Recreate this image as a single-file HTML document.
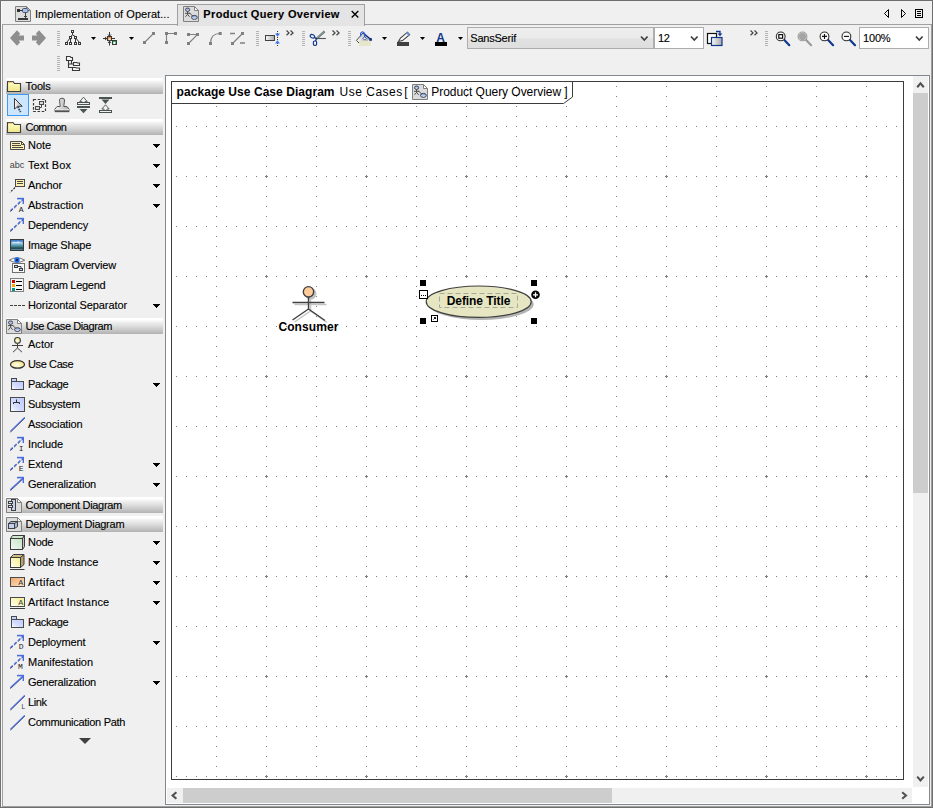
<!DOCTYPE html>
<html><head><meta charset="utf-8"><title>Product Query Overview</title>
<style>
html,body{margin:0;padding:0}
body{width:933px;height:808px;position:relative;overflow:hidden;background:#f0f0f0;font-family:"Liberation Sans",sans-serif}
.a{position:absolute}
.t{position:absolute;white-space:pre;-webkit-text-stroke:0.12px}
.d{-webkit-text-stroke:0}
.hd{position:absolute;left:6px;width:157px;height:16px;background:linear-gradient(#fff 0,#fff 12%,#f0f0f0 26%,#dedede 50%,#c8c8c8 76%,#b2b2b2 100%)}
svg{position:absolute;overflow:visible}
.ce{shape-rendering:crispEdges}
.dd{position:absolute;width:0;height:0;border-left:3.5px solid transparent;border-right:3.5px solid transparent;border-top:4px solid #000}
</style></head><body>
<div class="a" style="left:0px;top:0px;width:933px;height:1px;background:#6e6e6e;"></div>
<div class="a" style="left:0px;top:0px;width:1px;height:808px;background:#727272;"></div>
<div class="a" style="left:931px;top:24px;width:1px;height:783px;background:#a0a0a0;"></div>
<div class="a" style="left:932px;top:0px;width:1px;height:808px;background:#6e6e6e;"></div>
<div class="a" style="left:2px;top:806px;width:930px;height:1px;background:#a0a0a0;"></div>
<div class="a" style="left:0px;top:807px;width:933px;height:1px;background:#6e6e6e;"></div>
<div class="a" style="left:1px;top:1px;width:1px;height:805px;background:#f8f8f8;"></div>
<div class="a" style="left:2px;top:24px;width:930px;height:1px;background:#a0a0a0;"></div>
<div class="a" style="left:2px;top:24px;width:1px;height:782px;background:#a0a0a0;"></div>
<div class="a" style="left:177px;top:4px;width:188px;height:22px;background:#e4e4e4;border:1px solid #a0a0a0;border-bottom:none;box-sizing:border-box;height:22px"></div>
<div class="a" style="left:178px;top:5px;width:186px;height:21px;background:#e4e4e4;"></div>
<svg style="left:15px;top:6px" width="16" height="16" viewBox="0 0 16 16"><path d="M0.5 0.5 H11.5 L15.5 4.5 V15.5 H0.5 Z" fill="#dcdcdc" stroke="#808080"/><path d="M11.5 0.5 V4.5 H15.5 Z" fill="#fff" stroke="#808080" stroke-linejoin="round"/><rect x="2" y="3" width="3" height="3" fill="#303030"/><path d="M5 4.5 H8" stroke="#303030"/><rect x="7.5" y="2.5" width="5.5" height="4" rx="1.2" fill="#a8c0ec" stroke="#404858" stroke-width="0.9"/><path d="M10.5 6.8 V12 M9 10.5 H12" stroke="#404040"/><rect x="3" y="12" width="10" height="2" fill="#383838"/></svg>
<svg style="left:183px;top:6px" width="16" height="16" viewBox="0 0 16 16"><path d="M0.5 0.5 H11.5 L15.5 4.5 V15.5 H0.5 Z" fill="#dcdcdc" stroke="#808080"/><path d="M11.5 0.5 V4.5 H15.5 Z" fill="#fff" stroke="#808080" stroke-linejoin="round"/><ellipse cx="4.6" cy="3.7" rx="2.1" ry="1.7" fill="url(#gbe)" stroke="#3c4458" stroke-width="1"/><path d="M4.6 5.4 V8.4 M2 7.3 H7.2 M4.6 8.4 L2.4 10.8 M4.6 8.4 L6.6 10.8 M6.6 7 L10 10.4" stroke="#404040" stroke-width="0.9" fill="none"/><ellipse cx="11.4" cy="11.4" rx="2.9" ry="2" fill="url(#gbe)" stroke="#3c4458" stroke-width="1"/></svg>
<svg style="left:351px;top:10px" width="8" height="8" viewBox="0 0 8 8"><path d="M0.7 1 L7.3 7.6 M7.3 1 L0.7 7.6" stroke="#000" stroke-width="1.35" fill="none"/></svg>
<svg style="left:880px;top:6px" width="40" height="16" viewBox="0 0 40 16"><path d="M8.5 3.5 L4.5 7.5 L8.5 11.5 Z" fill="none" stroke="#000" stroke-width="1"/><path d="M21.5 3.5 L25.5 7.5 L21.5 11.5 Z" fill="none" stroke="#000" stroke-width="1"/><rect x="35.5" y="3.5" width="7" height="8" fill="none" stroke="#000"/><path d="M37 5.5h4M37 7.5h4M37 9.5h4" stroke="#000"/></svg>
<svg width="0" height="0" style="left:0;top:0"><defs>
<linearGradient id="gy" x1="0" y1="0" x2="0" y2="1"><stop offset="0" stop-color="#ffffc4"/><stop offset="1" stop-color="#f2e68a"/></linearGradient>
<linearGradient id="gyd" x1="1" y1="0" x2="0" y2="1"><stop offset="0" stop-color="#f6ee90"/><stop offset="1" stop-color="#fffff0"/></linearGradient>
<linearGradient id="gb" x1="1" y1="0" x2="0" y2="1"><stop offset="0" stop-color="#bccaff"/><stop offset="0.6" stop-color="#d4dcff"/><stop offset="1" stop-color="#ffffff"/></linearGradient>
<linearGradient id="gg" x1="1" y1="0" x2="0" y2="1"><stop offset="0" stop-color="#c4e4c4"/><stop offset="1" stop-color="#f4f8f4"/></linearGradient>
<linearGradient id="go" x1="0" y1="0" x2="1" y2="1"><stop offset="0" stop-color="#f0a868"/><stop offset="1" stop-color="#fce4cc"/></linearGradient>
<linearGradient id="gs" x1="0" y1="0" x2="1" y2="0"><stop offset="0" stop-color="#fafafa"/><stop offset="1" stop-color="#a8a8a8"/></linearGradient>
<linearGradient id="gsv" x1="0" y1="0" x2="0" y2="1"><stop offset="0" stop-color="#f4f4f4"/><stop offset="1" stop-color="#8c8c8c"/></linearGradient>
<linearGradient id="gimg" x1="0" y1="0" x2="0" y2="1"><stop offset="0" stop-color="#2c68c0"/><stop offset="0.35" stop-color="#8cc0e4"/><stop offset="0.6" stop-color="#4c8c9c"/><stop offset="0.8" stop-color="#1c4444"/><stop offset="1" stop-color="#7cb4dc"/></linearGradient>
<linearGradient id="gcombo" x1="0" y1="0" x2="0" y2="1"><stop offset="0" stop-color="#eeeeee"/><stop offset="0.5" stop-color="#ebebeb"/><stop offset="0.55" stop-color="#e1e1e1"/><stop offset="1" stop-color="#dedede"/></linearGradient>
<radialGradient id="gyr" cx="0.45" cy="0.6" r="0.7"><stop offset="0" stop-color="#fffff0"/><stop offset="1" stop-color="#f0dc6c"/></radialGradient>
<linearGradient id="gbe" x1="0" y1="0" x2="0" y2="1"><stop offset="0" stop-color="#7c9cd8"/><stop offset="1" stop-color="#f0f4fc"/></linearGradient>
</defs></svg>
<svg style="left:0;top:0" width="933" height="76" viewBox="0 0 933 76"><path d="M10 38 L17 30.3 L20.2 33.8 L18.6 35.4 H24 V40.6 H18.6 L20.2 42.2 L17 45.7 Z" fill="#8e8e8e"/><path d="M46 38 L39 30.3 L35.8 33.8 L37.4 35.4 H32 V40.6 H37.4 L35.8 42.2 L39 45.7 Z" fill="#8e8e8e"/><rect x="57" y="31" width="3" height="1" fill="#b4b4b4"/><rect x="57" y="33" width="3" height="1" fill="#b4b4b4"/><rect x="57" y="35" width="3" height="1" fill="#b4b4b4"/><rect x="57" y="37" width="3" height="1" fill="#b4b4b4"/><rect x="57" y="39" width="3" height="1" fill="#b4b4b4"/><rect x="57" y="41" width="3" height="1" fill="#b4b4b4"/><rect x="57" y="43" width="3" height="1" fill="#b4b4b4"/><rect x="57" y="45" width="3" height="1" fill="#b4b4b4"/><path d="M72.5 33 V35 M72.5 35 L70.5 36.5 M72.5 35 L75.5 36.5 M70.5 38.5 V42 M75.5 38.5 V42 M69.8 38.5 L66.8 42.2 M76.2 38.5 L79.2 42.2" stroke="#383838" fill="none"/><rect x="71.5" y="30.5" width="2" height="2" fill="#f0f0f0" stroke="#383838" stroke-width="1"/><rect x="69.5" y="36.5" width="2" height="2" fill="#f0f0f0" stroke="#383838" stroke-width="1"/><rect x="74.5" y="36.5" width="2" height="2" fill="#f0f0f0" stroke="#383838" stroke-width="1"/><rect x="65.5" y="42.5" width="2" height="2" fill="#f0f0f0" stroke="#383838" stroke-width="1"/><rect x="69.5" y="42.5" width="2" height="2" fill="#f0f0f0" stroke="#383838" stroke-width="1"/><rect x="74.5" y="42.5" width="2" height="2" fill="#f0f0f0" stroke="#383838" stroke-width="1"/><rect x="78.5" y="42.5" width="2" height="2" fill="#f0f0f0" stroke="#383838" stroke-width="1"/><path d="M91 37 h5 l-2.5 3 Z" fill="#000"/><path d="M109.5 32 V36.5 M109.5 41 V45.5 M103 38.5 H107 M112 38.5 H115" stroke="#383838" fill="none"/><path d="M108 34.5 L109.5 36.3 L111 34.5 M108 43 L109.5 41.2 L111 43 M105 37 L106.8 38.5 L105 40" stroke="#383838" fill="none"/><rect x="107.5" y="36.5" width="4" height="4" fill="#f08c3c" stroke="#383838"/><rect x="108.6" y="38.4" width="2" height="1.7" fill="#fff0d8"/><rect x="112.5" y="40.5" width="4" height="4" fill="#30b060" stroke="#383838"/><rect x="113.3" y="42" width="2" height="2" fill="#fff"/><path d="M129 37 h5 l-2.5 3 Z" fill="#000"/><path d="M144.5 42.5 L153.5 33.5" stroke="#808080" stroke-width="1.1"/><rect x="143.0" y="41.0" width="3" height="3" fill="#808080"/><rect x="152.0" y="32.0" width="3" height="3" fill="#808080"/><path d="M166.5 42.5 V33.5 H175.5" stroke="#808080" stroke-width="1.1" fill="none"/><rect x="165.0" y="41.0" width="3" height="3" fill="#808080"/><rect x="165.0" y="32.0" width="3" height="3" fill="#808080"/><rect x="174.0" y="32.0" width="3" height="3" fill="#808080"/><path d="M188.5 34.5 H197.5 L188.5 43.5" stroke="#808080" stroke-width="1.1" fill="none"/><rect x="187.0" y="33.0" width="3" height="3" fill="#808080"/><rect x="196.0" y="33.0" width="3" height="3" fill="#808080"/><rect x="187.0" y="42.0" width="3" height="3" fill="#808080"/><path d="M210.5 43.5 Q210.5 33.5 220 33.5" stroke="#808080" stroke-width="1.2" fill="none"/><rect x="209.0" y="42.0" width="3" height="3" fill="#808080"/><rect x="218.7" y="32.0" width="3" height="3" fill="#808080"/><path d="M232.5 43.5 L242.5 33.5 M230 33.5 H235 M240 43 H245" stroke="#808080" stroke-width="1.3" fill="none"/><rect x="231.0" y="42.0" width="3" height="3" fill="#808080"/><rect x="241.0" y="32.0" width="3" height="3" fill="#808080"/><rect x="256" y="31" width="3" height="1" fill="#b4b4b4"/><rect x="256" y="33" width="3" height="1" fill="#b4b4b4"/><rect x="256" y="35" width="3" height="1" fill="#b4b4b4"/><rect x="256" y="37" width="3" height="1" fill="#b4b4b4"/><rect x="256" y="39" width="3" height="1" fill="#b4b4b4"/><rect x="256" y="41" width="3" height="1" fill="#b4b4b4"/><rect x="256" y="43" width="3" height="1" fill="#b4b4b4"/><rect x="256" y="45" width="3" height="1" fill="#b4b4b4"/><rect x="265.5" y="35.5" width="9" height="5" fill="url(#gs)" stroke="#404040"/><path d="M277.5 31 V46" stroke="#383838" stroke-dasharray="1 1"/><path d="M275 33.6 H280 L277.5 36.8 Z M275 43.4 H280 L277.5 40.2 Z" fill="#3c78f0"/><path d="M286.5 30.5 l2.5 2.4 l-2.5 2.4 M290.5 30.5 l2.5 2.4 l-2.5 2.4" fill="none" stroke="#484848" stroke-width="1.3"/><rect x="302" y="31" width="3" height="1" fill="#b4b4b4"/><rect x="302" y="33" width="3" height="1" fill="#b4b4b4"/><rect x="302" y="35" width="3" height="1" fill="#b4b4b4"/><rect x="302" y="37" width="3" height="1" fill="#b4b4b4"/><rect x="302" y="39" width="3" height="1" fill="#b4b4b4"/><rect x="302" y="41" width="3" height="1" fill="#b4b4b4"/><rect x="302" y="43" width="3" height="1" fill="#b4b4b4"/><rect x="302" y="45" width="3" height="1" fill="#b4b4b4"/><path d="M316.2 39 L324.6 31.4" stroke="#606868" stroke-width="2.2" fill="none"/><path d="M317 38 L324.4 31.4" stroke="#a8d8e0" stroke-width="0.7" fill="none"/><path d="M316 38.5 H325.8" stroke="#505050" stroke-width="1.1" fill="none"/><path d="M314.2 37.2 L316.4 38.6 L315.6 41" stroke="#10388c" stroke-width="1.3" fill="none"/><ellipse cx="312.4" cy="36.2" rx="2.3" ry="1.7" transform="rotate(25 312.4 36.2)" fill="none" stroke="#10388c" stroke-width="1.15"/><rect x="313.4" y="41" width="3.2" height="4.4" rx="1.2" fill="none" stroke="#10388c" stroke-width="1.15"/><path d="M332.5 30.5 l2.5 2.4 l-2.5 2.4 M336.5 30.5 l2.5 2.4 l-2.5 2.4" fill="none" stroke="#484848" stroke-width="1.3"/><rect x="348" y="31" width="3" height="1" fill="#b4b4b4"/><rect x="348" y="33" width="3" height="1" fill="#b4b4b4"/><rect x="348" y="35" width="3" height="1" fill="#b4b4b4"/><rect x="348" y="37" width="3" height="1" fill="#b4b4b4"/><rect x="348" y="39" width="3" height="1" fill="#b4b4b4"/><rect x="348" y="41" width="3" height="1" fill="#b4b4b4"/><rect x="348" y="43" width="3" height="1" fill="#b4b4b4"/><rect x="348" y="45" width="3" height="1" fill="#b4b4b4"/><path d="M356.4 40.4 L363 33 L369.6 39 L363 45 Z" fill="url(#gs)"/><path d="M360 44 L356.4 40.4 L363 33" fill="none" stroke="#484848" stroke-width="1"/><path d="M363.4 33.2 L370.6 39.2" stroke="#10287c" stroke-width="1.4"/><rect x="369.3" y="38.2" width="2.6" height="2.6" fill="#10287c"/><rect x="359" y="41" width="12" height="5" fill="#e6e6c8"/><path d="M360.6 36.4 V33.4 Q362.4 30.2 364.6 33.4 V37.4" fill="none" stroke="#3060e0" stroke-width="1.2"/><rect x="363.4" y="37.2" width="2.4" height="2.4" transform="rotate(45 364.6 38.4)" fill="#f0f0f0" stroke="#2048b0" stroke-width="0.8"/><path d="M382 37 h5 l-2.5 3 Z" fill="#000"/><rect x="397" y="42" width="12" height="4" fill="#404040"/><path d="M398.5 41.5 L400.5 38 L407.5 32.2 L409.6 34.6 L402.5 40.6 Z" fill="#f8f8f8" stroke="#404040" stroke-width="1.1"/><path d="M406.2 33.2 L407.6 32.1 L409.7 34.6 L408.4 35.7 Z" fill="#6c98ec"/><path d="M420 37 h5 l-2.5 3 Z" fill="#000"/><rect x="435" y="42" width="12" height="4" fill="#000"/><text x="436.2" y="41.6" font-family="Liberation Sans,sans-serif" font-weight="bold" font-size="12" fill="#10388c">A</text><path d="M458 37 h5 l-2.5 3 Z" fill="#000"/><rect x="467.5" y="27.5" width="186" height="21" fill="url(#gcombo)" stroke="#adadad"/><path d="M641 36.5 l3.3 3.6 l3.3 -3.6" fill="none" stroke="#404040" stroke-width="1.7"/><rect x="654.5" y="27.5" width="49" height="21" fill="#fff" stroke="#adadad"/><path d="M691 36.5 l3.3 3.6 l3.3 -3.6" fill="none" stroke="#404040" stroke-width="1.7"/><rect x="707.5" y="33.5" width="9" height="10" fill="#fff" stroke="#101010" stroke-width="1.2"/><rect x="711.5" y="37.5" width="10.5" height="8" fill="url(#gs)" stroke="#10388c" stroke-width="1.2"/><path d="M716 31.5 H720 V34" fill="none" stroke="#10388c" stroke-width="1.3"/><path d="M717.6 33.4 H722.4 L720 36.2 Z" fill="#10388c"/><path d="M750.5 30.5 l2.5 2.4 l-2.5 2.4 M754.5 30.5 l2.5 2.4 l-2.5 2.4" fill="none" stroke="#484848" stroke-width="1.3"/><rect x="765" y="31" width="3" height="1" fill="#b4b4b4"/><rect x="765" y="33" width="3" height="1" fill="#b4b4b4"/><rect x="765" y="35" width="3" height="1" fill="#b4b4b4"/><rect x="765" y="37" width="3" height="1" fill="#b4b4b4"/><rect x="765" y="39" width="3" height="1" fill="#b4b4b4"/><rect x="765" y="41" width="3" height="1" fill="#b4b4b4"/><rect x="765" y="43" width="3" height="1" fill="#b4b4b4"/><rect x="765" y="45" width="3" height="1" fill="#b4b4b4"/><path d="M784.1 39.8 L789.3000000000001 45.2" stroke="#10388c" stroke-width="2.2" stroke-linecap="round"/><circle cx="780.7" cy="36.4" r="4.4" fill="#fafafa" stroke="#303030" stroke-width="1.1"/><rect x="778.8" y="34.6" width="3.8" height="3.6" fill="#fff" stroke="#101010" stroke-width="1.2"/><path d="M805.9 39.8 L811.1 45.2" stroke="#9a9a9a" stroke-width="2.2" stroke-linecap="round"/><circle cx="802.5" cy="36.4" r="4.4" fill="#fafafa" stroke="#9a9a9a" stroke-width="1.1"/><circle cx="802.5" cy="36.4" r="3.6" fill="#a4a4a4"/><path d="M827.9 39.8 L833.1 45.2" stroke="#10388c" stroke-width="2.2" stroke-linecap="round"/><circle cx="824.5" cy="36.4" r="4.4" fill="#fafafa" stroke="#303030" stroke-width="1.1"/><path d="M822 36.4 H827 M824.5 33.9 V38.9" stroke="#101010" stroke-width="1.1"/><path d="M849.8 39.8 L855.0 45.2" stroke="#10388c" stroke-width="2.2" stroke-linecap="round"/><circle cx="846.4" cy="36.4" r="4.4" fill="#fafafa" stroke="#303030" stroke-width="1.1"/><path d="M844 36.4 H849" stroke="#101010" stroke-width="1.1"/><rect x="859.5" y="27.5" width="69" height="21" fill="#fff" stroke="#adadad"/><path d="M916 36.5 l3.3 3.6 l3.3 -3.6" fill="none" stroke="#404040" stroke-width="1.7"/><rect x="57" y="56" width="3" height="1" fill="#b4b4b4"/><rect x="57" y="58" width="3" height="1" fill="#b4b4b4"/><rect x="57" y="60" width="3" height="1" fill="#b4b4b4"/><rect x="57" y="62" width="3" height="1" fill="#b4b4b4"/><rect x="57" y="64" width="3" height="1" fill="#b4b4b4"/><rect x="57" y="66" width="3" height="1" fill="#b4b4b4"/><rect x="57" y="68" width="3" height="1" fill="#b4b4b4"/><rect x="57" y="70" width="3" height="1" fill="#b4b4b4"/><path d="M66.5 56.5 H70 L71 57.5 H72.5 V60.5 H66.5 Z M73.5 62.5 H76.5 L77.5 63 H79.5 V65.5 H73.5 Z M72.5 67.5 H75.5 L76.5 68 H79.5 V70.5 H72.5 Z" fill="#f8f8f8" stroke="#383838" stroke-width="1.1"/><path d="M68.5 61 V67.5 H72 M71.5 61 V64 H73 M68.5 64 H71.5" fill="none" stroke="#383838" stroke-width="1.1"/></svg>
<div class="hd" style="top:78px"></div>
<svg style="left:6px;top:78px" width="16" height="16" viewBox="0 0 16 16"><path d="M1.5 3.5 H7 L8.5 5.5 H14.5 V13.5 H1.5 Z" fill="url(#gy)" stroke="#404040" stroke-width="1.1"/><path d="M2.2 4.3 H6.6" stroke="#f0b070" stroke-width="1"/></svg>
<div class="hd" style="top:119px"></div>
<svg style="left:6px;top:119px" width="16" height="16" viewBox="0 0 16 16"><path d="M1.5 3.5 H7 L8.5 5.5 H14.5 V13.5 H1.5 Z" fill="url(#gy)" stroke="#404040" stroke-width="1.1"/><path d="M2.2 4.3 H6.6" stroke="#f0b070" stroke-width="1"/></svg>
<div class="hd" style="top:318px"></div>
<svg style="left:6px;top:318px" width="16" height="16" viewBox="0 0 16 16"><path d="M0.5 1.5 H11.5 L15.5 5.5 V15.5 H0.5 Z" fill="#dcdcdc" stroke="#808080"/><path d="M11.5 1.5 V5.5 H15.5 Z" fill="#fff" stroke="#808080" stroke-linejoin="round"/><ellipse cx="4.6" cy="4.6" rx="2.1" ry="1.7" fill="url(#gbe)" stroke="#3c4458" stroke-width="1"/><path d="M4.6 6.3 V9.2 M2 7.6 H7.2 M4.6 9.2 L2.4 11.8 M4.6 9.2 L6.6 11.8 M6.6 7.2 L10 10.6" stroke="#404040" stroke-width="0.9" fill="none"/><ellipse cx="11.4" cy="11.6" rx="2.9" ry="1.9" fill="url(#gbe)" stroke="#3c4458" stroke-width="1"/></svg>
<div class="hd" style="top:497px"></div>
<svg style="left:6px;top:497px" width="16" height="16" viewBox="0 0 16 16"><path d="M0.5 1.5 H11.5 L15.5 5.5 V15.5 H0.5 Z" fill="#dcdcdc" stroke="#808080"/><path d="M11.5 1.5 V5.5 H15.5 Z" fill="#fff" stroke="#808080" stroke-linejoin="round"/><rect x="5.5" y="2.5" width="4" height="11" fill="#c4d0ec" stroke="#404040"/><rect x="2.5" y="4.5" width="4" height="2" fill="#e0e4f0" stroke="#404040"/><rect x="2.5" y="8.5" width="4" height="2" fill="#e0e4f0" stroke="#404040"/></svg>
<div class="hd" style="top:516px"></div>
<svg style="left:6px;top:516px" width="16" height="16" viewBox="0 0 16 16"><path d="M0.5 1.5 H11.5 L15.5 5.5 V15.5 H0.5 Z" fill="#dcdcdc" stroke="#808080"/><path d="M11.5 1.5 V5.5 H15.5 Z" fill="#fff" stroke="#808080" stroke-linejoin="round"/><path d="M2.5 7.5 L5 5.5 H11.5 V10.5 L8.5 12.5" fill="#aab8d8" stroke="#404040"/><rect x="2.5" y="7.5" width="6" height="5" fill="#c4d0ec" stroke="#404040"/><path d="M8.5 7.5 L11.5 5.5" stroke="#404040"/></svg>
<div class="a" style="left:7px;top:94px;width:22px;height:22px;background:#cde6ff;border:1px solid #3c9cf0;box-sizing:border-box"></div>
<svg style="left:0;top:0" width="130" height="120" viewBox="0 0 130 120">
<path d="M14.5 98.4 V109.2 L17.3 106.3 H22.2 Z" fill="url(#gs)" stroke="#3c3c3c" stroke-width="1" stroke-linejoin="miter"/>
<path d="M17.9 106.8 L20.6 112.2" stroke="#3c3c3c" stroke-width="1.8" stroke-dasharray="1.5 0.9"/>
<rect x="33.5" y="99.5" width="12" height="12" fill="none" stroke="#3c3c3c" stroke-width="1.2" stroke-dasharray="2.6 1.6"/>
<rect x="39.5" y="101.5" width="4" height="3" fill="#d8d8d8" stroke="#4a4a4a"/><rect x="35.5" y="106.5" width="4" height="3" fill="#d8d8d8" stroke="#4a4a4a"/><path d="M41.5 105 V107.5 H40" fill="none" stroke="#4a4a4a"/>
<path d="M59.5 100 Q59.5 98.2 62 98.2 Q64.6 98.2 64.6 100 L63.8 106.5 H67 L69 109 V111.7 H55 V109 L57 106.5 H60.2 Z" fill="url(#gs)" stroke="#4a4a4a" stroke-width="0.9"/><rect x="55" y="109" width="14" height="2.8" fill="url(#gsv)"/><path d="M55 111.2 H69" stroke="#4a4a4a" stroke-width="1.4"/>
<path d="M83.5 97.2 L87.3 101.6 H85 V102.5 H82 V101.6 H79.7 Z" fill="#f0f0f0" stroke="#4a5450" stroke-width="0.9"/>
<rect x="77.5" y="102.5" width="12" height="2" fill="#f0f0f0" stroke="#4a5450"/><rect x="77" y="106" width="13" height="2" fill="#4a5450"/>
<path d="M79.5 109 H87.5 L83.5 113.3 Z" fill="#4a5450"/>
<rect x="99" y="97" width="13" height="2" fill="#4a5450"/><path d="M101.5 99.5 H109.5 L105.5 104 Z" fill="#4a5450"/>
<path d="M105.5 104.8 L109.2 109 H107 V110.5 H104 V109 H101.8 Z" fill="#f0f0f0" stroke="#4a5450" stroke-width="0.9"/>
<rect x="99.5" y="110.5" width="12" height="2" fill="#f0f0f0" stroke="#4a5450"/>
</svg>
<svg style="left:9px;top:137px" width="16" height="16" viewBox="0 0 16 16"><path d="M1.5 4.5 H12.5 L15.5 7.5 V12.5 H1.5 Z" fill="#fff0b0" stroke="#4a4a4a"/><path d="M12.5 4.5 V7.5 H15.5" fill="none" stroke="#4a4a4a"/><path d="M3 6.5 H11 M3 8.5 H12 M3 10.5 H14" stroke="#4a4a4a"/></svg>
<svg class="ce" style="left:153px;top:144px" width="7" height="4" viewBox="0 0 7 4"><path d="M0 0h7v1h-1v1h-1v1h-1v1h-1v-1h-1v-1h-1v-1h-1z" fill="#000"/></svg>
<svg style="left:9px;top:157px" width="16" height="16" viewBox="0 0 16 16"><text x="0.8" y="11" font-family="Liberation Sans,sans-serif" font-size="9" fill="#404040">abc</text></svg>
<svg class="ce" style="left:153px;top:164px" width="7" height="4" viewBox="0 0 7 4"><path d="M0 0h7v1h-1v1h-1v1h-1v1h-1v-1h-1v-1h-1v-1h-1z" fill="#000"/></svg>
<svg style="left:9px;top:177px" width="16" height="16" viewBox="0 0 16 16"><rect x="6.5" y="2.5" width="9" height="7" fill="#fff0b0" stroke="#4a4a4a"/><path d="M8 4.5 H14 M8 6.5 H14" stroke="#4a4a4a"/><path d="M6 10.5 L1 15.5" stroke="#303030" stroke-width="1.1" stroke-dasharray="2.2 1.2"/></svg>
<svg class="ce" style="left:153px;top:184px" width="7" height="4" viewBox="0 0 7 4"><path d="M0 0h7v1h-1v1h-1v1h-1v1h-1v-1h-1v-1h-1v-1h-1z" fill="#000"/></svg>
<svg style="left:9px;top:197px" width="16" height="16" viewBox="0 0 16 16"><path d="M1.5 14.5 L14.5 2.3" stroke="#1a1a30" stroke-width="0.9" fill="none" stroke-dasharray="3.4 1.7"/><path d="M1.3 13.8 L14.3 1.7" stroke="#4a6ee0" stroke-width="1.2" fill="none" stroke-dasharray="3.4 1.7"/><path d="M8 1.6 H14.9" stroke="#4a6ee0" stroke-width="1.6" fill="none"/><path d="M14.3 1 V7" stroke="#4a6ee0" stroke-width="1.4" fill="none"/><text x="9.8" y="15" font-family="Liberation Mono,monospace" font-size="8" fill="#202020">A</text></svg>
<svg class="ce" style="left:153px;top:204px" width="7" height="4" viewBox="0 0 7 4"><path d="M0 0h7v1h-1v1h-1v1h-1v1h-1v-1h-1v-1h-1v-1h-1z" fill="#000"/></svg>
<svg style="left:9px;top:217px" width="16" height="16" viewBox="0 0 16 16"><path d="M1.5 14.5 L14.5 2.3" stroke="#1a1a30" stroke-width="0.9" fill="none" stroke-dasharray="3.4 1.7"/><path d="M1.3 13.8 L14.3 1.7" stroke="#4a6ee0" stroke-width="1.2" fill="none" stroke-dasharray="3.4 1.7"/><path d="M8 1.6 H14.9" stroke="#4a6ee0" stroke-width="1.6" fill="none"/><path d="M14.3 1 V7" stroke="#4a6ee0" stroke-width="1.4" fill="none"/></svg>
<svg style="left:9px;top:237px" width="16" height="16" viewBox="0 0 16 16"><rect x="1.5" y="2.5" width="13" height="11" fill="url(#gimg)" stroke="#3a3a3a"/><path d="M3 6 q2 -2 4 -0.5 q2 -2 4 0 q1.5 -0.5 2.5 0.8 H3 Z" fill="#e8f4fc" opacity="0.85"/></svg>
<svg style="left:9px;top:257px" width="16" height="16" viewBox="0 0 16 16"><rect x="3.5" y="6.5" width="12" height="9" fill="#f8f8f8" stroke="#707070"/><path d="M0.3 3.2 Q8 -1.6 15.7 3.2 Q8 7.6 0.3 3.2 Z" fill="#fff" stroke="#505050" stroke-width="0.8"/><circle cx="8" cy="3" r="2.7" fill="#1868ec"/><circle cx="8" cy="3" r="1.1" fill="#201838"/><rect x="5.5" y="8.5" width="3" height="2" fill="#c4d0ec" stroke="#404040"/><rect x="10.5" y="11.5" width="3" height="2" fill="#c4d0ec" stroke="#404040"/><path d="M9 9.5 H12 V11" fill="none" stroke="#404040"/></svg>
<svg style="left:9px;top:277px" width="16" height="16" viewBox="0 0 16 16"><rect x="1.5" y="1.5" width="13" height="13" fill="#f6f6f6" stroke="#808080"/><rect x="3" y="3" width="3" height="3" fill="#c80000"/><rect x="3" y="7" width="3" height="3" fill="#ffa800"/><rect x="3" y="11" width="3" height="3" fill="#009484"/><path d="M7 4.5 H13 M7 8.5 H13 M7 12.5 H13" stroke="#000" stroke-width="1.2"/></svg>
<svg style="left:9px;top:297px" width="16" height="16" viewBox="0 0 16 16"><path d="M1 8.5 H16" stroke="#404040" stroke-width="1.2" stroke-dasharray="3 1"/></svg>
<svg class="ce" style="left:153px;top:304px" width="7" height="4" viewBox="0 0 7 4"><path d="M0 0h7v1h-1v1h-1v1h-1v1h-1v-1h-1v-1h-1v-1h-1z" fill="#000"/></svg>
<svg style="left:9px;top:336px" width="16" height="16" viewBox="0 0 16 16"><circle cx="8.5" cy="4.4" r="2.9" fill="url(#gyr)" stroke="#3a3a3a" stroke-width="1.1"/><path d="M8.5 7.4 V12 M3 9.5 H14 M8.5 12 L4 16.2 M8.5 12 L13 16.2" stroke="#404040" stroke-width="1" fill="none"/></svg>
<svg style="left:9px;top:356px" width="16" height="16" viewBox="0 0 16 16"><ellipse cx="8.5" cy="8.4" rx="7" ry="3.8" fill="url(#gyr)" stroke="#303030" stroke-width="1.25"/></svg>
<svg style="left:9px;top:376px" width="16" height="16" viewBox="0 0 16 16"><rect x="2.5" y="2.5" width="5" height="3" fill="#c4d0ff" stroke="#4a4a4a"/><rect x="2.5" y="5.5" width="12" height="8" fill="url(#gb)" stroke="#4a4a4a"/></svg>
<svg class="ce" style="left:153px;top:383px" width="7" height="4" viewBox="0 0 7 4"><path d="M0 0h7v1h-1v1h-1v1h-1v1h-1v-1h-1v-1h-1v-1h-1z" fill="#000"/></svg>
<svg style="left:9px;top:396px" width="16" height="16" viewBox="0 0 16 16"><rect x="1.5" y="1.5" width="14" height="14" fill="url(#gb)" stroke="#4a4a4a"/><path d="M7.5 3.5 V6.5 M4.5 8 V6.5 H10.5 V8" fill="none" stroke="#303030"/></svg>
<svg style="left:9px;top:416px" width="16" height="16" viewBox="0 0 16 16"><path d="M1.5 16 L15.9 1.9" stroke="#1a1a30" stroke-width="0.9" fill="none"/><path d="M1.3 15.4 L15.7 1.3" stroke="#4a6ee0" stroke-width="1.15" fill="none"/></svg>
<svg style="left:9px;top:436px" width="16" height="16" viewBox="0 0 16 16"><path d="M1.5 14.5 L14.5 2.3" stroke="#1a1a30" stroke-width="0.9" fill="none" stroke-dasharray="3.4 1.7"/><path d="M1.3 13.8 L14.3 1.7" stroke="#4a6ee0" stroke-width="1.2" fill="none" stroke-dasharray="3.4 1.7"/><path d="M8 1.6 H14.9" stroke="#4a6ee0" stroke-width="1.6" fill="none"/><path d="M14.3 1 V7" stroke="#4a6ee0" stroke-width="1.4" fill="none"/><text x="9.8" y="15" font-family="Liberation Mono,monospace" font-size="8" fill="#202020">I</text></svg>
<svg style="left:9px;top:456px" width="16" height="16" viewBox="0 0 16 16"><path d="M1.5 14.5 L14.5 2.3" stroke="#1a1a30" stroke-width="0.9" fill="none" stroke-dasharray="3.4 1.7"/><path d="M1.3 13.8 L14.3 1.7" stroke="#4a6ee0" stroke-width="1.2" fill="none" stroke-dasharray="3.4 1.7"/><path d="M8 1.6 H14.9" stroke="#4a6ee0" stroke-width="1.6" fill="none"/><path d="M14.3 1 V7" stroke="#4a6ee0" stroke-width="1.4" fill="none"/><text x="9.8" y="15" font-family="Liberation Mono,monospace" font-size="8" fill="#202020">E</text></svg>
<svg class="ce" style="left:153px;top:463px" width="7" height="4" viewBox="0 0 7 4"><path d="M0 0h7v1h-1v1h-1v1h-1v1h-1v-1h-1v-1h-1v-1h-1z" fill="#000"/></svg>
<svg style="left:9px;top:476px" width="16" height="16" viewBox="0 0 16 16"><path d="M1.5 14.5 L14.5 2.3" stroke="#1a1a30" stroke-width="0.9" fill="none"/><path d="M1.3 13.8 L14.3 1.7" stroke="#4a6ee0" stroke-width="1.2" fill="none"/><path d="M8 1.6 H14.9" stroke="#4a6ee0" stroke-width="1.6" fill="none"/><path d="M14.3 1 V7" stroke="#4a6ee0" stroke-width="1.4" fill="none"/></svg>
<svg class="ce" style="left:153px;top:483px" width="7" height="4" viewBox="0 0 7 4"><path d="M0 0h7v1h-1v1h-1v1h-1v1h-1v-1h-1v-1h-1v-1h-1z" fill="#000"/></svg>
<svg style="left:9px;top:534px" width="16" height="16" viewBox="0 0 16 16"><path d="M1.5 4.5 L3.5 1.5 H15.5 L13.5 4.5 Z" fill="#cfe6cf" stroke="#3c3c3c" stroke-linejoin="round"/><path d="M13.5 4.5 L15.5 1.5 V12.5 L13.5 15.5 Z" fill="#c6c6c6" stroke="#3c3c3c" stroke-linejoin="round"/><rect x="1.5" y="4.5" width="12" height="11" fill="url(#gg)" stroke="#3c3c3c"/></svg>
<svg class="ce" style="left:153px;top:541px" width="7" height="4" viewBox="0 0 7 4"><path d="M0 0h7v1h-1v1h-1v1h-1v1h-1v-1h-1v-1h-1v-1h-1z" fill="#000"/></svg>
<svg style="left:9px;top:554px" width="16" height="16" viewBox="0 0 16 16"><path d="M1.5 3.5 L4.5 0.5 H15 L11.5 3.5 Z" fill="#cdbd84" stroke="#3c3c3c" stroke-linejoin="round"/><path d="M11.5 3.5 L15 0.5 V10.5 L11.5 13.5 Z" fill="#b4a468" stroke="#3c3c3c" stroke-linejoin="round"/><rect x="1.5" y="3.5" width="10" height="10" fill="url(#gyd)" stroke="#3c3c3c"/><path d="M1 15.5 H15.5" stroke="#3c3c3c"/></svg>
<svg class="ce" style="left:153px;top:561px" width="7" height="4" viewBox="0 0 7 4"><path d="M0 0h7v1h-1v1h-1v1h-1v1h-1v-1h-1v-1h-1v-1h-1z" fill="#000"/></svg>
<svg style="left:9px;top:574px" width="16" height="16" viewBox="0 0 16 16"><rect x="1.5" y="3.5" width="14" height="9" fill="url(#go)" stroke="#4a4a4a"/><text x="9.3" y="11.2" font-family="Liberation Sans,sans-serif" font-size="7.5" fill="#303030">A</text></svg>
<svg class="ce" style="left:153px;top:581px" width="7" height="4" viewBox="0 0 7 4"><path d="M0 0h7v1h-1v1h-1v1h-1v1h-1v-1h-1v-1h-1v-1h-1z" fill="#000"/></svg>
<svg style="left:9px;top:594px" width="16" height="16" viewBox="0 0 16 16"><rect x="1.5" y="3.5" width="14" height="9" fill="url(#gyd)" stroke="#4a4a4a"/><text x="9.3" y="11.2" font-family="Liberation Sans,sans-serif" font-size="7.5" fill="#303030">A</text><path d="M1 14.5 H16" stroke="#3c3c3c"/></svg>
<svg class="ce" style="left:153px;top:601px" width="7" height="4" viewBox="0 0 7 4"><path d="M0 0h7v1h-1v1h-1v1h-1v1h-1v-1h-1v-1h-1v-1h-1z" fill="#000"/></svg>
<svg style="left:9px;top:614px" width="16" height="16" viewBox="0 0 16 16"><rect x="2.5" y="2.5" width="5" height="3" fill="#c4d0ff" stroke="#4a4a4a"/><rect x="2.5" y="5.5" width="12" height="8" fill="url(#gb)" stroke="#4a4a4a"/></svg>
<svg style="left:9px;top:634px" width="16" height="16" viewBox="0 0 16 16"><path d="M1.5 14.5 L14.5 2.3" stroke="#1a1a30" stroke-width="0.9" fill="none" stroke-dasharray="3.4 1.7"/><path d="M1.3 13.8 L14.3 1.7" stroke="#4a6ee0" stroke-width="1.2" fill="none" stroke-dasharray="3.4 1.7"/><path d="M8 1.6 H14.9" stroke="#4a6ee0" stroke-width="1.6" fill="none"/><path d="M14.3 1 V7" stroke="#4a6ee0" stroke-width="1.4" fill="none"/><text x="9.8" y="15" font-family="Liberation Mono,monospace" font-size="8" fill="#202020">D</text></svg>
<svg class="ce" style="left:153px;top:641px" width="7" height="4" viewBox="0 0 7 4"><path d="M0 0h7v1h-1v1h-1v1h-1v1h-1v-1h-1v-1h-1v-1h-1z" fill="#000"/></svg>
<svg style="left:9px;top:654px" width="16" height="16" viewBox="0 0 16 16"><path d="M1.5 14.5 L14.5 2.3" stroke="#1a1a30" stroke-width="0.9" fill="none" stroke-dasharray="3.4 1.7"/><path d="M1.3 13.8 L14.3 1.7" stroke="#4a6ee0" stroke-width="1.2" fill="none" stroke-dasharray="3.4 1.7"/><path d="M8 1.6 H14.9" stroke="#4a6ee0" stroke-width="1.6" fill="none"/><path d="M14.3 1 V7" stroke="#4a6ee0" stroke-width="1.4" fill="none"/><text x="9.0" y="15" font-family="Liberation Mono,monospace" font-size="8" fill="#202020">M</text></svg>
<svg style="left:9px;top:674px" width="16" height="16" viewBox="0 0 16 16"><path d="M1.5 14.5 L14.5 2.3" stroke="#1a1a30" stroke-width="0.9" fill="none"/><path d="M1.3 13.8 L14.3 1.7" stroke="#4a6ee0" stroke-width="1.2" fill="none"/><path d="M8 1.6 H14.9" stroke="#4a6ee0" stroke-width="1.6" fill="none"/><path d="M14.3 1 V7" stroke="#4a6ee0" stroke-width="1.4" fill="none"/></svg>
<svg class="ce" style="left:153px;top:681px" width="7" height="4" viewBox="0 0 7 4"><path d="M0 0h7v1h-1v1h-1v1h-1v1h-1v-1h-1v-1h-1v-1h-1z" fill="#000"/></svg>
<svg style="left:9px;top:694px" width="16" height="16" viewBox="0 0 16 16"><path d="M1.5 16 L15.9 1.9" stroke="#1a1a30" stroke-width="0.9" fill="none"/><path d="M1.3 15.4 L15.7 1.3" stroke="#4a6ee0" stroke-width="1.15" fill="none"/><text x="12.4" y="15.2" font-family="Liberation Sans,sans-serif" font-size="6.5" fill="#303030">L</text></svg>
<svg style="left:9px;top:714px" width="16" height="16" viewBox="0 0 16 16"><path d="M1.5 16 L15.9 1.9" stroke="#1a1a30" stroke-width="0.9" fill="none"/><path d="M1.3 15.4 L15.7 1.3" stroke="#4a6ee0" stroke-width="1.15" fill="none"/></svg>
<div class="a" style="left:79px;top:738px;width:0;height:0;border-left:6px solid transparent;border-right:6px solid transparent;border-top:6px solid #404040"></div>
<div class="a" style="left:165px;top:75px;width:765px;height:730px;background:#fff;border:1px solid #828790;box-sizing:border-box"></div>
<svg style="left:166px;top:76px" width="747" height="711" viewBox="0 0 747 711" shape-rendering="crispEdges">
<defs>
<pattern id="gh" x="0" y="0" width="10" height="50" patternUnits="userSpaceOnUse"><rect x="0" y="0" width="1" height="1" fill="#808080"/></pattern>
<pattern id="gv" x="0" y="0" width="50" height="10" patternUnits="userSpaceOnUse"><rect x="0" y="0" width="1" height="1" fill="#808080"/></pattern>
<pattern id="gp" x="-1" y="-1" width="100" height="100" patternUnits="userSpaceOnUse"><path d="M0 1.5h3M1.5 0v3" stroke="#808080" stroke-width="1" fill="none"/></pattern>
<clipPath id="fc"><rect x="6" y="6" width="731" height="697"/></clipPath>
</defs>
<g clip-path="url(#fc)">
<rect x="0" y="0" width="747" height="711" fill="url(#gh)"/>
<rect x="0" y="0" width="747" height="711" fill="url(#gv)"/>
<rect x="0" y="0" width="747" height="711" fill="url(#gp)"/>
</g>
</svg>
<svg style="left:166px;top:76px" width="747" height="711" viewBox="0 0 747 711">
<rect x="5.5" y="5.5" width="732" height="698" fill="none" stroke="#3c3c3c" stroke-width="1"/>
<path d="M5.5 27.5 H397.5 L406.5 21 V5.5" fill="none" stroke="#3c3c3c" stroke-width="1"/>
</svg>
<svg style="left:412px;top:84px" width="16" height="16" viewBox="0 0 16 16"><path d="M0.5 0.5 H11.5 L15.5 4.5 V15.5 H0.5 Z" fill="#dcdcdc" stroke="#808080"/><path d="M11.5 0.5 V4.5 H15.5 Z" fill="#fff" stroke="#808080" stroke-linejoin="round"/><ellipse cx="4.6" cy="3.7" rx="2.1" ry="1.7" fill="url(#gbe)" stroke="#3c4458" stroke-width="1"/><path d="M4.6 5.4 V8.4 M2 7.3 H7.2 M4.6 8.4 L2.4 10.8 M4.6 8.4 L6.6 10.8 M6.6 7 L10 10.4" stroke="#404040" stroke-width="0.9" fill="none"/><ellipse cx="11.4" cy="11.4" rx="2.9" ry="2" fill="url(#gbe)" stroke="#3c4458" stroke-width="1"/></svg>
<svg style="left:0;top:0" width="933" height="808" viewBox="0 0 933 808">
<g stroke="#c4c4c4" stroke-width="1.5" fill="none"><path d="M310.5 299 V311 M294.5 304.5 H326.5 M310.5 311 L294.5 322 M310.5 311 L327 322.5"/><circle cx="310.5" cy="293.8" r="5.2" fill="#c0c0c0"/></g>
<g stroke="#404040" stroke-width="1.4" fill="none"><path d="M308.5 297 V309 M292.5 302.5 H324.5 M308.5 309 L292.5 320 M308.5 309 L325 320.5"/><circle cx="308.5" cy="291.8" r="5.2" fill="#ffcc99"/></g>
<ellipse cx="481.2" cy="304.2" rx="52.5" ry="15.7" fill="#b4b4b4"/>
<ellipse cx="478.7" cy="301.7" rx="52.5" ry="15.7" fill="#e6e6c2" stroke="#404040" stroke-width="1.2"/>
<rect x="439.5" y="293.5" width="78" height="14" fill="none" stroke="#a8a89a" stroke-dasharray="5 3"/>
<g fill="#000"><rect x="420" y="280" width="6" height="6"/><rect x="531" y="280" width="6" height="6"/><rect x="420" y="318" width="6" height="6"/><rect x="531" y="318" width="6" height="6"/></g>
<rect x="419.5" y="290.5" width="8" height="8" fill="#fff" stroke="#000"/><path d="M421 295h1v1h-1z M423 295h1v1h-1z M425 295h1v1h-1z" fill="#000" shape-rendering="crispEdges"/>
<circle cx="535.5" cy="294.8" r="4.3" fill="#000"/><path d="M533 294.8 H538 M535.5 292.3 V297.3" stroke="#fff" stroke-width="1.3"/>
<rect x="431.5" y="315.5" width="6" height="6" fill="#fff" stroke="#000"/><path d="M433.5 319.5 L435.5 317.5 M434 317.5 H435.5 V319" stroke="#000" stroke-width="0.9" fill="none"/>
</svg>
<div class="a" style="left:913px;top:76px;width:15px;height:711px;background:#f0f0f0;"></div>
<div class="a" style="left:913px;top:93px;width:15px;height:400px;background:#cdcdcd;"></div>
<div class="a" style="left:167px;top:788px;width:745px;height:15px;background:#f0f0f0;"></div>
<div class="a" style="left:183px;top:788px;width:429px;height:15px;background:#cdcdcd;"></div>
<svg style="left:913px;top:76px" width="15" height="711" viewBox="0 0 15 711"><path d="M4.2 11.2 L7.5 7.4 L10.8 11.2" fill="none" stroke="#505050" stroke-width="2.1"/><path d="M4.2 700.6 L7.5 704.4 L10.8 700.6" fill="none" stroke="#505050" stroke-width="2.1"/></svg>
<svg style="left:167px;top:788px" width="745" height="15" viewBox="0 0 745 15"><path d="M9.4 4.2 L5.6 7.5 L9.4 10.8" fill="none" stroke="#505050" stroke-width="2.1"/><path d="M735.2 4.2 L739 7.5 L735.2 10.8" fill="none" stroke="#505050" stroke-width="2.1"/></svg>
<div class="t " style="left:35px;top:8.69px;font:11px/1 'Liberation Sans';letter-spacing:0.045px;color:#000">Implementation of Operat...</div>
<div class="t " style="left:203.3px;top:8.69px;font:bold 11px/1 'Liberation Sans';letter-spacing:0.369px;color:#000">Product Query Overview</div>
<div class="t " style="left:470.3px;top:32.69px;font:11px/1 'Liberation Sans';letter-spacing:-0.223px;color:#000">SansSerif</div>
<div class="t " style="left:658px;top:32.69px;font:11px/1 'Liberation Sans';letter-spacing:-0.375px;color:#000">12</div>
<div class="t " style="left:863px;top:32.69px;font:11px/1 'Liberation Sans';letter-spacing:-0.160px;color:#000">100%</div>
<div class="t " style="left:25.6px;top:80.69px;font:11px/1 'Liberation Sans';letter-spacing:-0.158px;color:#000">Tools</div>
<div class="t " style="left:25.6px;top:121.69px;font:11px/1 'Liberation Sans';letter-spacing:-0.654px;color:#000">Common</div>
<div class="t " style="left:25.6px;top:320.69px;font:11px/1 'Liberation Sans';letter-spacing:-0.408px;color:#000">Use Case Diagram</div>
<div class="t " style="left:25.6px;top:499.69px;font:11px/1 'Liberation Sans';letter-spacing:-0.300px;color:#000">Component Diagram</div>
<div class="t " style="left:25.6px;top:518.69px;font:11px/1 'Liberation Sans';letter-spacing:-0.257px;color:#000">Deployment Diagram</div>
<div class="t " style="left:28.0px;top:139.69px;font:11px/1 'Liberation Sans';letter-spacing:-0.062px;color:#000">Note</div>
<div class="t " style="left:28.0px;top:159.69px;font:11px/1 'Liberation Sans';letter-spacing:0.102px;color:#000">Text Box</div>
<div class="t " style="left:28.0px;top:179.69px;font:11px/1 'Liberation Sans';letter-spacing:-0.143px;color:#000">Anchor</div>
<div class="t " style="left:28.0px;top:199.69px;font:11px/1 'Liberation Sans';letter-spacing:0.024px;color:#000">Abstraction</div>
<div class="t " style="left:28.0px;top:219.69px;font:11px/1 'Liberation Sans';letter-spacing:-0.178px;color:#000">Dependency</div>
<div class="t " style="left:28.0px;top:239.69px;font:11px/1 'Liberation Sans';letter-spacing:-0.213px;color:#000">Image Shape</div>
<div class="t " style="left:28.0px;top:259.69px;font:11px/1 'Liberation Sans';letter-spacing:-0.154px;color:#000">Diagram Overview</div>
<div class="t " style="left:28.0px;top:279.69px;font:11px/1 'Liberation Sans';letter-spacing:-0.289px;color:#000">Diagram Legend</div>
<div class="t " style="left:28.0px;top:299.69px;font:11px/1 'Liberation Sans';letter-spacing:-0.095px;color:#000">Horizontal Separator</div>
<div class="t " style="left:28.0px;top:338.69px;font:11px/1 'Liberation Sans';letter-spacing:0.022px;color:#000">Actor</div>
<div class="t " style="left:28.0px;top:358.69px;font:11px/1 'Liberation Sans';letter-spacing:-0.387px;color:#000">Use Case</div>
<div class="t " style="left:28.0px;top:378.69px;font:11px/1 'Liberation Sans';letter-spacing:-0.359px;color:#000">Package</div>
<div class="t " style="left:28.0px;top:398.69px;font:11px/1 'Liberation Sans';letter-spacing:-0.247px;color:#000">Subsystem</div>
<div class="t " style="left:28.0px;top:418.69px;font:11px/1 'Liberation Sans';letter-spacing:-0.170px;color:#000">Association</div>
<div class="t " style="left:28.0px;top:438.69px;font:11px/1 'Liberation Sans';letter-spacing:-0.041px;color:#000">Include</div>
<div class="t " style="left:28.0px;top:458.69px;font:11px/1 'Liberation Sans';letter-spacing:0.008px;color:#000">Extend</div>
<div class="t " style="left:28.0px;top:478.69px;font:11px/1 'Liberation Sans';letter-spacing:-0.210px;color:#000">Generalization</div>
<div class="t " style="left:28.0px;top:536.69px;font:11px/1 'Liberation Sans';letter-spacing:-0.274px;color:#000">Node</div>
<div class="t " style="left:28.0px;top:556.69px;font:11px/1 'Liberation Sans';letter-spacing:-0.041px;color:#000">Node Instance</div>
<div class="t " style="left:28.0px;top:576.69px;font:11px/1 'Liberation Sans';letter-spacing:0.308px;color:#000">Artifact</div>
<div class="t " style="left:28.0px;top:596.69px;font:11px/1 'Liberation Sans';letter-spacing:0.143px;color:#000">Artifact Instance</div>
<div class="t " style="left:28.0px;top:616.69px;font:11px/1 'Liberation Sans';letter-spacing:-0.359px;color:#000">Package</div>
<div class="t " style="left:28.0px;top:636.69px;font:11px/1 'Liberation Sans';letter-spacing:-0.140px;color:#000">Deployment</div>
<div class="t " style="left:28.0px;top:656.69px;font:11px/1 'Liberation Sans';letter-spacing:-0.034px;color:#000">Manifestation</div>
<div class="t " style="left:28.0px;top:676.69px;font:11px/1 'Liberation Sans';letter-spacing:-0.210px;color:#000">Generalization</div>
<div class="t " style="left:28.0px;top:696.69px;font:11px/1 'Liberation Sans';letter-spacing:-0.422px;color:#000">Link</div>
<div class="t " style="left:28.0px;top:716.69px;font:11px/1 'Liberation Sans';letter-spacing:-0.273px;color:#000">Communication Path</div>
<div class="t d" style="left:176.6px;top:85.84px;font:bold 12px/1 'Liberation Sans';letter-spacing:0.052px;color:#000">package Use Case Diagram</div>
<div class="t d" style="left:339.6px;top:85.84px;font:12px/1 'Liberation Sans';letter-spacing:0.490px;color:#000">Use Cases</div>
<div class="t d" style="left:404.3px;top:85.84px;font:12px/1 'Liberation Sans';color:#000">[</div>
<div class="t d" style="left:431.3px;top:85.84px;font:12px/1 'Liberation Sans';letter-spacing:-0.046px;color:#000">Product Query Overview</div>
<div class="t d" style="left:564.3px;top:85.84px;font:12px/1 'Liberation Sans';color:#000">]</div>
<div class="t d" style="left:278.4px;top:320.84px;font:bold 12px/1 'Liberation Sans';letter-spacing:0.107px;color:#000">Consumer</div>
<div class="t d" style="left:446.7px;top:294.84px;font:bold 12px/1 'Liberation Sans';letter-spacing:-0.072px;color:#000">Define Title</div>
</body></html>
